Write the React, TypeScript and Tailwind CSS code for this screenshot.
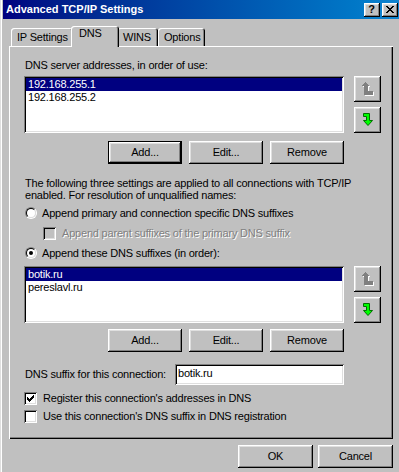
import React from "react";

const raised =
  "shadow-[inset_-1px_-1px_0_#000,inset_1px_1px_0_#fff,inset_-2px_-2px_0_#808080,inset_2px_2px_0_#dfdfdf]";
const defRaised =
  "shadow-[inset_0_0_0_1px_#000,inset_-2px_-2px_0_#000,inset_2px_2px_0_#fff,inset_-3px_-3px_0_#808080,inset_3px_3px_0_#dfdfdf]";
const sunken =
  "shadow-[inset_1px_1px_0_#808080,inset_-1px_-1px_0_#fff,inset_2px_2px_0_#000,inset_-2px_-2px_0_#dfdfdf]";

function Btn({ label, w, def }: { label: string; w: string; def?: boolean }) {
  return (
    <div className={`${w} h-[23px] flex items-center justify-center bg-[#c0c0c0] ${def ? defRaised : raised}`}>
      {label}
    </div>
  );
}

function UpIcon() {
  // disabled: gray arrow with white emboss
  return (
    <svg width="12" height="14" viewBox="0 0 12 14" shapeRendering="crispEdges">
      <polygon points="4.5,1 9,5 7,5 7,10 12,10 12,14 3,14 3,5 0,5" fill="#fff" />
      <polygon points="3.5,0 8,4 6,4 6,9 11,9 11,13 2,13 2,4 -1,4" fill="#808080" />
    </svg>
  );
}

function DownIcon() {
  return (
    <svg width="12" height="14" viewBox="0 0 12 14">
      <polygon
        points="1.5,0.5 7.5,0.5 7.5,7.5 10.5,7.5 6,12.5 1.5,7.5 4.5,7.5 4.5,3.5 1.5,3.5"
        fill="#00ff00"
        stroke="#007000"
        strokeWidth="1"
      />
    </svg>
  );
}

function ArrowCol() {
  return (
    <div className="ml-[10px] flex flex-col gap-[5px]">
      <div className={`w-[27px] h-[26px] flex items-center justify-center ${raised}`}>
        <UpIcon />
      </div>
      <div className={`w-[27px] h-[26px] flex items-center justify-center ${raised}`}>
        <DownIcon />
      </div>
    </div>
  );
}

function ListBox({ items }: { items: string[] }) {
  return (
    <div className={`w-[320px] h-[57px] bg-white p-[2px] ${sunken}`}>
      {items.map((it, i) => (
        <div
          key={it}
          className={`h-[13px] leading-[13px] pl-[2px] ${i === 0 ? "bg-[#000080] text-white" : ""}`}
        >
          {it}
        </div>
      ))}
    </div>
  );
}

function Radio({ on }: { on?: boolean }) {
  return (
    <div className="w-[12px] h-[12px] rounded-full border border-t-[#808080] border-l-[#808080] border-b-white border-r-white">
      <div className="w-[10px] h-[10px] rounded-full border border-t-black border-l-black border-b-[#dfdfdf] border-r-[#dfdfdf] bg-white flex items-center justify-center">
        {on && <div className="w-[4px] h-[4px] rounded-full bg-black" />}
      </div>
    </div>
  );
}

function Check({ on, disabled }: { on?: boolean; disabled?: boolean }) {
  return (
    <div
      className={`w-[13px] h-[13px] flex items-center justify-center ${sunken} ${disabled ? "bg-[#c0c0c0]" : "bg-white"}`}
    >
      {on && (
        <svg width="7" height="7" viewBox="0 0 7 7" shapeRendering="crispEdges">
          <path d="M0 2h1v1h1v1h1v-1h1v-1h1v-1h1v-1h1v3h-1v1h-1v1h-1v1h-1v1h-1v-1h-1v-1h-1v-1h-1z" fill="#000" />
        </svg>
      )}
    </div>
  );
}

function Tab({ label, w, active }: { label: string; w: string; active?: boolean }) {
  if (active)
    return (
      <div
        className={`${w} h-[21px] -mx-[2px] -mb-[1px] relative z-10 bg-[#c0c0c0] rounded-t-[3px] pl-[8px] pt-[1px] shadow-[inset_1px_1px_0_#fff,inset_-1px_0_0_#000,inset_-2px_0_0_#808080]`}
      >
        {label}
      </div>
    );
  return (
    <div
      className={`${w} h-[18px] bg-[#c0c0c0] rounded-t-[3px] pl-[6px] pt-[3px] shadow-[inset_1px_1px_0_#fff,inset_-1px_0_0_#000,inset_-2px_0_0_#808080]`}
    >
      {label}
    </div>
  );
}

export default function App() {
  return (
    <div className="w-[399px] h-[472px] overflow-hidden bg-[#c0c0c0] font-['Liberation_Sans',Arial,sans-serif] text-[11px] leading-[13px] tracking-[-0.2px] text-black">
      <div className="w-[403px] h-[472px] px-[3px] shadow-[inset_1px_0_0_#dfdfdf,inset_2px_0_0_#fff,inset_-1px_0_0_#000,inset_-2px_0_0_#808080]">
        {/* title bar */}
        <div className="h-[19px] flex items-center bg-linear-to-r from-[#000080] to-[#1084d0] pl-[3px] pr-[2px]">
          <span className="text-white font-bold text-[11px] tracking-normal flex-1">Advanced TCP/IP Settings</span>
          <div className={`w-[16px] h-[14px] bg-[#c0c0c0] ${raised} flex items-center justify-center font-bold text-[11px] leading-none pr-[1px]`}>
            ?
          </div>
          <div className={`ml-[2px] w-[16px] h-[14px] bg-[#c0c0c0] ${raised} flex items-center justify-center`}>
            <svg width="8" height="7" viewBox="0 0 8 7" shapeRendering="crispEdges">
              <path d="M0 0h2v1h1v1h2v-1h1v-1h2v1h-1v1h-1v1h-1v1h1v1h1v1h1v1h-2v-1h-1v-1h-2v1h-1v1h-2v-1h1v-1h1v-1h1v-1h-1v-1h-1v-1h-1z" fill="#000" />
            </svg>
          </div>
        </div>

        {/* tabs */}
        <div className="mt-[7px] pl-[8px] h-[20px] flex items-end">
          <Tab label="IP Settings" w="w-[62px]" />
          <Tab label="DNS" w="w-[48px]" active />
          <Tab label="WINS" w="w-[41px]" />
          <Tab label="Options" w="w-[47px]" />
        </div>

        {/* tab page */}
        <div className="ml-[6px] w-[384px] h-[393px] pl-[15px] shadow-[inset_1px_1px_0_#fff,inset_-1px_-1px_0_#000,inset_-2px_-2px_0_#808080] flex flex-col">
          <div className="mt-[13px] pl-[1px]">DNS server addresses, in order of use:</div>
          <div className="mt-[4px] flex">
            <ListBox items={["192.168.255.1", "192.168.255.2"]} />
            <ArrowCol />
          </div>
          <div className="mt-[8px] w-[320px] flex justify-end gap-[7px]">
            <Btn label="Add..." w="w-[74px]" def />
            <Btn label="Edit..." w="w-[74px]" />
            <Btn label="Remove" w="w-[74px]" />
          </div>

          <div className="mt-[13px] pl-[1px] leading-[12px] whitespace-nowrap">
            The following three settings are applied to all connections with TCP/IP
            <br />
            enabled. For resolution of unqualified names:
          </div>

          <div className="mt-[5px] h-[14px] flex items-center pl-[1px] gap-[5px]">
            <Radio />
            <span>Append primary and connection specific DNS suffixes</span>
          </div>
          <div className="mt-[6px] h-[14px] flex items-center pl-[19px] gap-[6px]">
            <Check disabled />
            <span className="text-[#808080] [text-shadow:1px_1px_0_#fff]">
              Append parent suffixes of the primary DNS suffix
            </span>
          </div>
          <div className="mt-[6px] h-[14px] flex items-center pl-[1px] gap-[5px]">
            <Radio on />
            <span>Append these DNS suffixes (in order):</span>
          </div>

          <div className="mt-[6px] flex">
            <ListBox items={["botik.ru", "pereslavl.ru"]} />
            <ArrowCol />
          </div>
          <div className="mt-[6px] w-[320px] flex justify-end gap-[7px]">
            <Btn label="Add..." w="w-[74px]" />
            <Btn label="Edit..." w="w-[74px]" />
            <Btn label="Remove" w="w-[74px]" />
          </div>

          <div className="mt-[12px] w-[320px] flex items-center justify-between">
            <span className="pl-[1px]">DNS suffix for this connection:</span>
            <div className={`w-[169px] h-[21px] bg-white pl-[3px] pt-[3px] ${sunken}`}>botik.ru</div>
          </div>

          <div className="mt-[6px] h-[14px] flex items-center gap-[6px]">
            <Check on />
            <span>Register this connection's addresses in DNS</span>
          </div>
          <div className="mt-[4px] h-[14px] flex items-center gap-[6px]">
            <Check />
            <span>Use this connection's DNS suffix in DNS registration</span>
          </div>
        </div>

        {/* dialog buttons */}
        <div className="mt-[6px] pr-[7px] flex justify-end gap-[5px]">
          <Btn label="OK" w="w-[75px]" />
          <Btn label="Cancel" w="w-[75px]" />
        </div>
      </div>
    </div>
  );
}
